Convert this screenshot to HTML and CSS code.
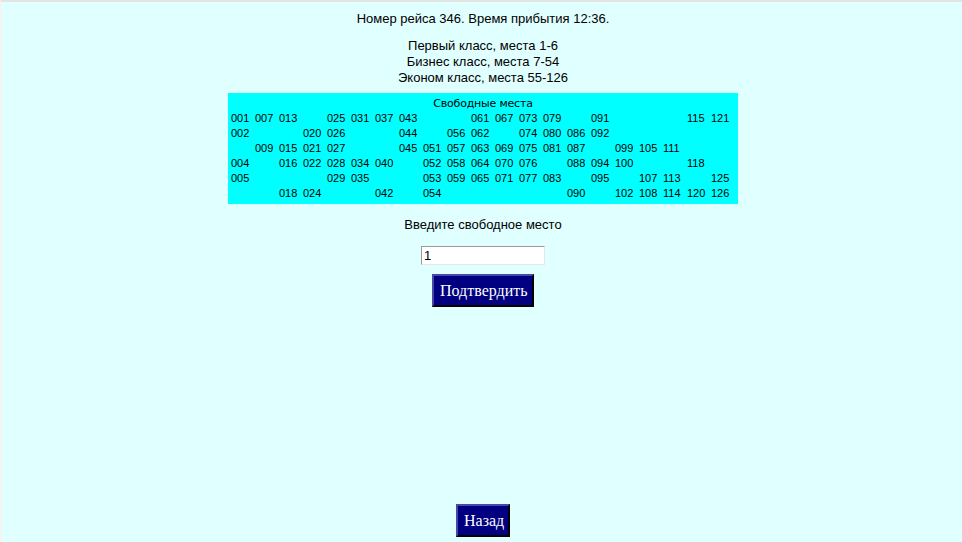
FILE: index.html
```html
<!DOCTYPE html>
<html lang="ru">
<head>
<meta charset="utf-8">
<title>Выбор места</title>
<link rel="stylesheet" href="styles.css">
</head>
<body>
<div class="page">
  <p class="flight">Номер рейса 346. Время прибытия 12:36.</p>
  <p class="classes">Первый класс, места 1-6<br>Бизнес класс, места 7-54<br>Эконом класс, места 55-126</p>
  <div class="seats">
    <div class="caption">Свободные места</div>
    <div class="grid" id="grid"></div>
  </div>
  <p class="prompt">Введите свободное место</p>
  <input class="seat-input" type="text" value="1">
  <button class="btn confirm" type="button">Подтвердить</button>
  <button class="btn back" type="button">Назад</button>
</div>
<script src="app.js"></script>
</body>
</html>
```
FILE: app.js
```js
var free = [
  1,7,13,25,31,37,43,61,67,73,79,91,115,121,
  2,20,26,44,56,62,74,80,86,92,
  9,15,21,27,45,51,57,63,69,75,81,87,99,105,111,
  4,16,22,28,34,40,52,58,64,70,76,88,94,100,118,
  5,29,35,53,59,65,71,77,83,95,107,113,125,
  18,24,42,54,90,102,108,114,120,126
];
var grid = document.getElementById('grid');
for (var r = 1; r <= 6; r++) {
  for (var c = 0; c < 21; c++) {
    var n = c * 6 + r;
    var cell = document.createElement('span');
    cell.className = 'cell';
    if (free.indexOf(n) !== -1) {
      cell.textContent = ('00' + n).slice(-3);
    }
    grid.appendChild(cell);
  }
}
```
FILE: styles.css
```css
html, body {
  margin: 0;
  padding: 0;
  height: 100%;
}
body {
  background: #e0ffff;
  border-top: 2px solid #e4e4e4;
  border-left: 2px solid #f4f4f4;
  box-sizing: border-box;
  font-family: "Liberation Sans", Arial, sans-serif;
  color: #000;
}
.page {
  display: flex;
  flex-direction: column;
  align-items: center;
  min-height: 100%;
  padding-left: 2px;
  box-sizing: border-box;
}
.flight {
  margin: 9px 0 0;
  font-size: 13px;
  line-height: 16px;
}
.classes {
  margin: 11px 0 0;
  font-size: 13px;
  line-height: 16px;
  text-align: center;
}
.seats {
  margin-top: 7px;
  background: #00ffff;
  padding: 3px;
  width: 504px;
}
.caption {
  text-align: center;
  font-family: "DejaVu Sans", sans-serif;
  font-size: 11px;
  line-height: 15px;
  letter-spacing: -0.2px;
}
.grid {
  display: grid;
  grid-template-columns: repeat(21, 24px);
  grid-auto-rows: 15px;
  font-size: 11px;
  line-height: 15px;
}
.cell {
  white-space: nowrap;
}
.prompt {
  margin: 13px 0 0;
  font-size: 13px;
  line-height: 16px;
}
.seat-input {
  margin-top: 13px;
  width: 124px;
  height: 19px;
  box-sizing: border-box;
  border: 1px solid;
  border-color: #9a9a9a #e6e6e6 #e6e6e6 #9a9a9a;
  background: #fff;
  padding: 0 2px;
  font-family: "Liberation Sans", Arial, sans-serif;
  font-size: 13px;
  color: #000;
  outline: none;
}
.btn {
  background: #000080;
  color: #fff;
  font-family: "Liberation Serif", "Times New Roman", serif;
  font-size: 16px;
  border: 2px solid;
  border-color: #4848a8 #000 #000 #4848a8;
  box-sizing: border-box;
  height: 33px;
  padding: 0 6px;
  cursor: pointer;
}
.confirm {
  margin-top: 9px;
  width: 102px;
}
.back {
  margin-top: auto;
  margin-bottom: 5px;
  width: 54px;
}
```
